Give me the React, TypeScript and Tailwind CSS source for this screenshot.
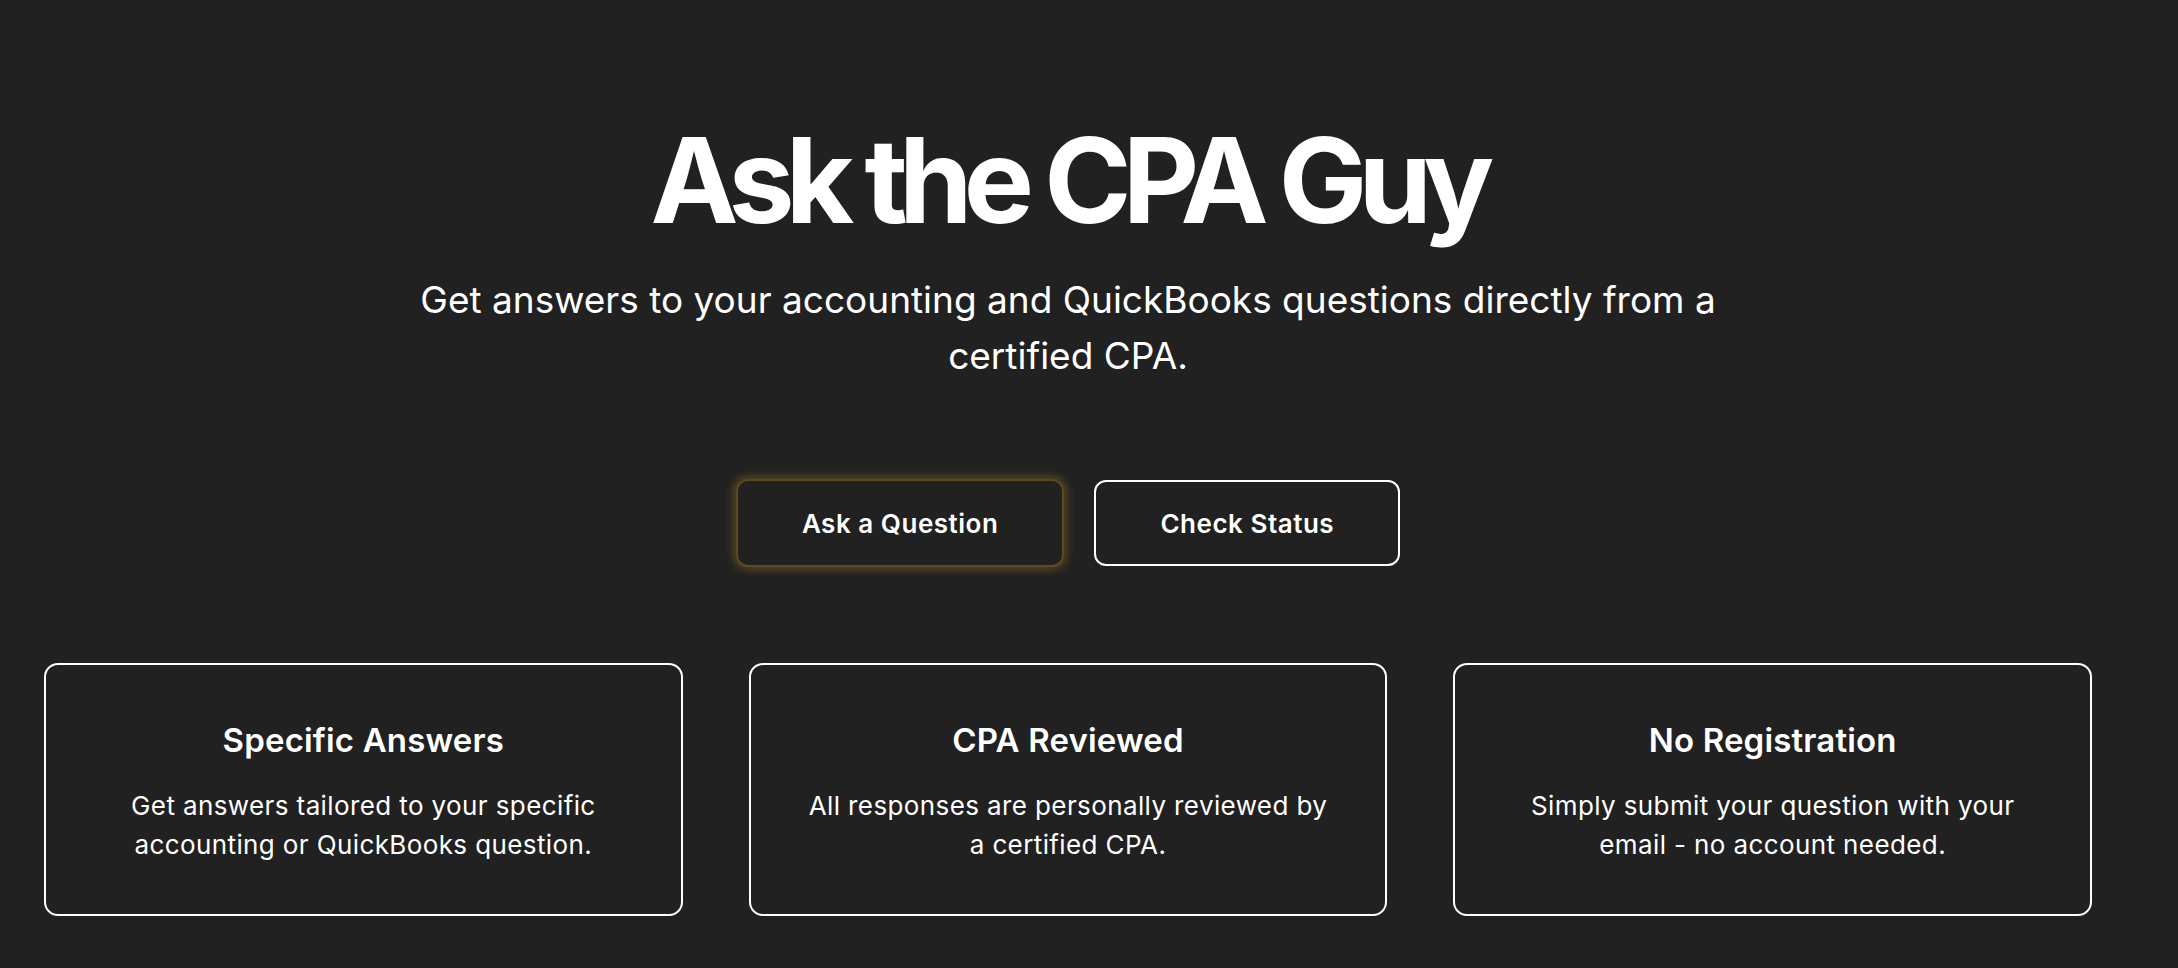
import { type ReactNode } from 'react';

const features = [
  {
    title: 'Specific Answers',
    body: 'Get answers tailored to your specific accounting or QuickBooks question.',
  },
  {
    title: 'CPA Reviewed',
    body: 'All responses are personally reviewed by a certified CPA.',
  },
  {
    title: 'No Registration',
    body: 'Simply submit your question with your email - no account needed.',
  },
];

function FeatureCard({ title, children }: { title: string; children: ReactNode }) {
  return (
    <div className="flex flex-col items-center rounded-[14px] border-2 border-white px-10 pt-[57px] pb-[50px] text-center">
      <h3 className="text-[33px] font-semibold leading-[36px] tracking-[0.005em]">{title}</h3>
      <p className="mt-[28px] max-w-[540px] text-[26px] leading-[39px] tracking-[0.015em]">{children}</p>
    </div>
  );
}

export default function App() {
  return (
    <div
      className="min-h-screen bg-[#212121] text-white"
      style={{ fontFamily: 'Inter, "Noto Sans", sans-serif' }}
    >
      <main className="mr-[42px] flex flex-col items-center px-[44px] pt-[121px] pb-[53px]">
        <h1 className="text-[118px] font-bold leading-none tracking-[-0.075em]">Ask the CPA Guy</h1>
        <p className="mt-[33px] max-w-[1340px] text-center text-[37px] leading-[56px]">
          Get answers to your accounting and QuickBooks questions directly from a certified CPA.
        </p>

        <div className="mt-[95px] flex items-center gap-[30px]">
          <button className="flex h-[88px] items-center rounded-[12px] border-2 border-[#5b4a20] bg-[#212121] px-[64px] text-[26px] font-semibold tracking-[0.02em] shadow-[0_0_9px_3px_rgba(150,115,35,0.45)]">
            Ask a Question
          </button>
          <button className="flex h-[86px] items-center rounded-[12px] border-2 border-white bg-[#212121] px-[64px] text-[26px] font-semibold tracking-[0.02em]">
            Check Status
          </button>
        </div>

        <section className="mt-[96px] grid w-full grid-cols-3 gap-[66px]">
          {features.map(f => (
            <FeatureCard key={f.title} title={f.title}>
              {f.body}
            </FeatureCard>
          ))}
        </section>
      </main>
    </div>
  );
}
